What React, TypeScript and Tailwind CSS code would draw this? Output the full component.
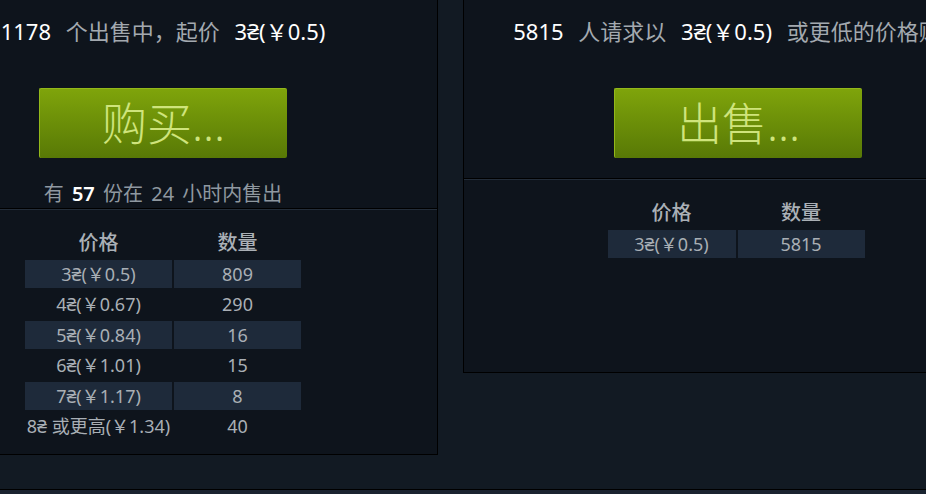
const font = { fontFamily: '"Noto Sans", "Noto Sans CJK SC", sans-serif' };

const sellOrders = [
  { price: '3₴(￥0.5)', qty: '809' },
  { price: '4₴(￥0.67)', qty: '290' },
  { price: '5₴(￥0.84)', qty: '16' },
  { price: '6₴(￥1.01)', qty: '15' },
  { price: '7₴(￥1.17)', qty: '8' },
  { price: '8₴ 或更高(￥1.34)', qty: '40' },
];

const buyOrders = [{ price: '3₴(￥0.5)', qty: '5815' }];

function GreenButton({ label }: { label: string }) {
  return (
    <button className="mx-auto flex h-[70px] w-[248px] items-center justify-center rounded-[2px] border-t border-l border-[#93b81a] bg-gradient-to-b from-[#7fa40b] to-[#587906] text-[45px] leading-none font-light text-[#cfe47c]">
      {label}
    </button>
  );
}

function OrderTable({ rows, priceWidth }: { rows: { price: string; qty: string }[]; priceWidth: string }) {
  return (
    <table className="mx-auto border-separate border-spacing-x-[2px] border-spacing-y-[2px]">
      <thead>
        <tr>
          <th className="h-[28.5px] text-[20px] font-medium leading-none text-[#aab0b6]">价格</th>
          <th className="h-[28.5px] text-[20px] font-medium leading-none text-[#aab0b6]">数量</th>
        </tr>
      </thead>
      <tbody>
        {rows.map((r, i) => (
          <tr key={i} className={i % 2 === 0 ? 'bg-[#1e2a3a]' : ''}>
            <td className={`${priceWidth} h-[28.5px] px-0 text-center text-[18px] leading-none whitespace-nowrap text-[#a9afb5]`}>{r.price}</td>
            <td className="h-[28.5px] w-[127px] text-center text-[18px] leading-none text-[#a9afb5]">{r.qty}</td>
          </tr>
        ))}
      </tbody>
    </table>
  );
}

export default function App() {
  return (
    <div className="flex h-[494px] w-[926px] flex-col overflow-hidden bg-[#121a23]" style={font}>
      <div className="flex h-[489px] shrink-0 items-start gap-[25px]">
        {/* sell side */}
        <div className="-ml-[111px] w-[549px] shrink-0 border-r border-b border-black bg-[#0e141c]">
          <div className="border-b border-black pt-[19px] pb-[2px] text-center">
            <div className="h-[24px] text-[22px] leading-[24px] whitespace-nowrap text-[#a3a9af] [word-spacing:9px]">
              <span className="text-white">1178</span> 个出售中，起价 <span className="text-white">3₴(￥0.5)</span>
            </div>
            <div className="mt-[45px]">
              <GreenButton label="购买..." />
            </div>
            <div className="mt-[24px] h-[24px] text-[20px] leading-[24px] whitespace-nowrap text-[#8f98a0] [word-spacing:3px]">
              有 <span className="font-semibold text-white">57</span> 份在 24 小时内售出
            </div>
          </div>
          <div className="h-[245px] border-t border-[#232d39] pt-[17px]">
            <OrderTable rows={sellOrders} priceWidth="w-[147px]" />
          </div>
        </div>

        {/* buy side */}
        <div className="w-[549px] shrink-0 border-b border-l border-black bg-[#0e141c]">
          <div className="border-b border-black pt-[19px] pb-[20px] text-center">
            <div className="h-[24px] text-[22px] leading-[24px] whitespace-nowrap text-[#a3a9af] [word-spacing:9px]">
              <span className="text-white">5815</span> 人请求以 <span className="text-white">3₴(￥0.5)</span> 或更低的价格购买
            </div>
            <div className="mt-[45px]">
              <GreenButton label="出售..." />
            </div>
          </div>
          <div className="h-[193px] border-t border-[#232d39] pt-[17px] pr-[4px]">
            <OrderTable rows={buyOrders} priceWidth="w-[128px]" />
          </div>
        </div>
      </div>
      <div className="flex-1 border-t border-black bg-[#1a2330]" />
    </div>
  );
}
